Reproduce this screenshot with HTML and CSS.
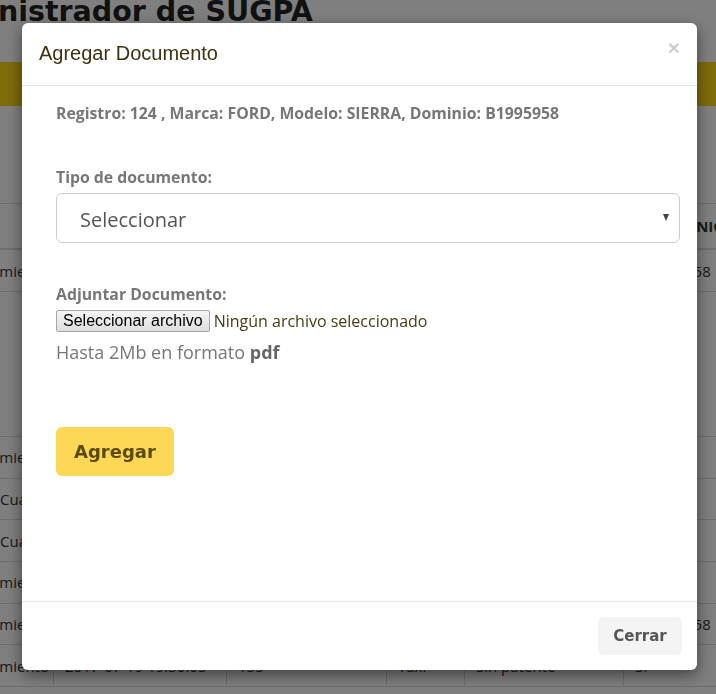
FILE: index.html
```html
<!DOCTYPE html>
<html lang="es">
<head>
<meta charset="utf-8">
<title>Agregar Documento</title>
<link rel="stylesheet" href="styles.css">
</head>
<body>
<div class="page">
  <h1 class="brand">Administrador de SUGPA</h1>
  <div class="band"></div>
  <div class="grid">
    <div class="row head">
      <div class="cell lead"></div><div class="cell">Fecha</div><div class="cell">Licencia</div><div class="cell">Tipo</div><div class="cell">Patente</div><div class="cell dom-head">DOMINIO</div>
    </div>
    <div class="row first">
      <div class="cell lead">Funcionamiento</div><div class="cell">2017-07-19 19:30:05</div><div class="cell">124</div><div class="cell">Taxi</div><div class="cell">FORD</div><div class="cell dom">B1995958</div>
    </div>
    <div class="row tall">
      <div class="cell lead"></div><div class="cell"></div><div class="cell"></div><div class="cell"></div><div class="cell"></div><div class="cell"></div>
    </div>
    <div class="row">
      <div class="cell lead">Funcionamiento</div><div class="cell">2017-07-19 19:30:05</div><div class="cell">131</div><div class="cell">Taxi</div><div class="cell">Sin patente</div><div class="cell"></div>
    </div>
    <div class="row">
      <div class="cell lead start">Cuarentena</div><div class="cell">2017-07-19 19:30:05</div><div class="cell">138</div><div class="cell">Taxi</div><div class="cell">Sin patente</div><div class="cell"></div>
    </div>
    <div class="row">
      <div class="cell lead start">Cuarentena</div><div class="cell">2017-07-19 19:30:05</div><div class="cell">142</div><div class="cell">Taxi</div><div class="cell">Sin patente</div><div class="cell"></div>
    </div>
    <div class="row">
      <div class="cell lead">Funcionamiento</div><div class="cell">2017-07-19 19:30:05</div><div class="cell">147</div><div class="cell">Taxi</div><div class="cell">Sin patente</div><div class="cell"></div>
    </div>
    <div class="row">
      <div class="cell lead">Funcionamiento</div><div class="cell">2017-07-19 19:30:05</div><div class="cell">151</div><div class="cell">Taxi</div><div class="cell">Sin patente</div><div class="cell dom">B1995958</div>
    </div>
    <div class="row">
      <div class="cell lead">Funcionamiento</div><div class="cell">2017-07-19 19:30:05</div><div class="cell">155</div><div class="cell">Taxi</div><div class="cell">Sin patente</div><div class="cell">SI</div>
    </div>
  </div>
</div>

<div class="backdrop"></div>

<div class="modal-layer">
  <div class="modal">
    <div class="modal-header">
      <h4 class="modal-title">Agregar Documento</h4>
      <button class="close" type="button">×</button>
    </div>
    <div class="modal-body">
      <p class="info">Registro: 124 , Marca: FORD, Modelo: SIERRA, Dominio: B1995958</p>
      <label class="field-label">Tipo de documento:</label>
      <div class="select"><span>Seleccionar</span><span class="caret"></span></div>
      <label class="field-label second">Adjuntar Documento:</label>
      <div class="file">
        <span class="file-btn">Seleccionar archivo</span>
        <span class="file-name">Ningún archivo seleccionado</span>
      </div>
      <p class="hint">Hasta 2Mb en formato <b>pdf</b></p>
      <button class="add" type="button">Agregar</button>
    </div>
    <div class="modal-footer">
      <button class="close-btn" type="button">Cerrar</button>
    </div>
  </div>
</div>
</body>
</html>
```

FILE: styles.css
```css
html, body {
  margin: 0;
  padding: 0;
}

body {
  width: 716px;
  height: 694px;
  overflow: hidden;
  background: #ffffff;
  font-family: "Open Sans", "Liberation Sans", sans-serif;
}

.page {
  width: 716px;
  height: 694px;
  overflow: hidden;
}

.brand {
  margin: 0;
  font-family: "DejaVu Sans", sans-serif;
  font-weight: bold;
  font-size: 28.5px;
  line-height: 24px;
  color: #222222;
  text-indent: -84px;
  white-space: nowrap;
}

.band {
  margin-top: 38px;
  height: 44px;
  background: #ffd817;
}

.grid {
  margin-top: 97px;
  width: 800px;
  border-top: 1px solid #dddddd;
  font-size: 15px;
  color: #333333;
}

.row {
  display: grid;
  grid-template-columns: 54px 173px 160px 78px 159px 176px;
  height: 41.7px;
  box-sizing: border-box;
  border-bottom: 1px solid #dddddd;
}

.row.head {
  height: 46px;
  border-bottom: 2px solid #dddddd;
  font-weight: bold;
}

.row.first {
  height: 42px;
}

.row.tall {
  height: 145px;
}

.cell {
  display: flex;
  align-items: center;
  padding: 0 8px 0 11px;
  border-right: 1px solid #dddddd;
  overflow: hidden;
  white-space: nowrap;
  min-width: 0;
}

.cell.lead {
  justify-content: flex-end;
  padding: 0 4px 0 0;
}

.cell.lead.start {
  justify-content: flex-start;
  padding: 0;
}

.cell.dom {
  padding-left: 17px;
}

.cell.dom-head {
  padding-left: 30px;
}

.backdrop {
  position: fixed;
  inset: 0;
  background: rgba(0, 0, 0, 0.5);
}

.modal-layer {
  position: fixed;
  inset: 0;
  box-sizing: border-box;
  padding: 23px 19px 24px 22px;
  display: flex;
}

.modal {
  flex: 1;
  display: flex;
  flex-direction: column;
  background: #ffffff;
  border-radius: 6px;
  box-shadow: 0 5px 15px rgba(0, 0, 0, 0.5);
  overflow: hidden;
}

.modal-header {
  display: flex;
  justify-content: space-between;
  align-items: flex-start;
  padding: 17px 17px 18px 17px;
  border-bottom: 1px solid #e5e5e5;
}

.modal-title {
  margin: 0;
  font-family: "Liberation Sans", Arial, sans-serif;
  font-weight: normal;
  font-size: 20px;
  line-height: 27px;
  color: #3f3010;
}

.close {
  margin-top: -3px;
  padding: 0;
  border: 0;
  background: none;
  font-family: "Liberation Sans", Arial, sans-serif;
  font-weight: bold;
  font-size: 21px;
  line-height: 21px;
  color: #000000;
  opacity: 0.2;
}

.modal-body {
  flex: 1;
  padding: 17px 17px 0 34px;
}

.info {
  margin: 0;
  font-weight: bold;
  font-size: 15.8px;
  line-height: 20px;
  color: #777777;
}

.field-label {
  display: block;
  margin: 44px 0 6px;
  font-weight: bold;
  font-size: 15.8px;
  line-height: 20px;
  color: #777777;
}

.field-label.second {
  margin-top: 41px;
}

.select {
  height: 50px;
  box-sizing: border-box;
  display: flex;
  align-items: center;
  justify-content: space-between;
  padding: 2px 10px 0 23px;
  border: 1px solid #cccccc;
  border-radius: 6px;
  font-size: 20px;
  color: #555555;
}

.caret {
  width: 0;
  height: 0;
  margin-top: -4px;
  border-left: 3.5px solid transparent;
  border-right: 3.5px solid transparent;
  border-top: 7px solid #444444;
}

.file {
  display: flex;
  align-items: center;
  height: 22px;
}

.file-btn {
  height: 22px;
  box-sizing: border-box;
  padding: 0 6px;
  border: 1px solid #a6a6a6;
  border-radius: 2px;
  background: linear-gradient(#f4f4f4, #dedede);
  font-family: "Liberation Sans", Arial, sans-serif;
  font-size: 16px;
  line-height: 20px;
  color: #000000;
}

.file-name {
  margin-left: 4px;
  font-size: 16px;
  line-height: 22px;
  color: #4a3b12;
}

.hint {
  margin: 8px 0 0;
  font-size: 18px;
  line-height: 24px;
  color: #777777;
}

.hint b {
  color: #666666;
}

.add {
  display: block;
  margin-top: 63px;
  height: 49px;
  padding: 0 18px;
  border: 0;
  border-radius: 6px;
  background: #fdd856;
  color: #5c4a0d;
  font-family: "DejaVu Sans", sans-serif;
  font-weight: bold;
  font-size: 18px;
}

.modal-footer {
  display: flex;
  justify-content: flex-end;
  padding: 15px;
  border-top: 1px solid #e5e5e5;
}

.close-btn {
  width: 84px;
  height: 38px;
  padding: 0;
  border: 0;
  border-radius: 5px;
  background: #f4f4f4;
  color: #555555;
  font-family: "DejaVu Sans", sans-serif;
  font-weight: bold;
  font-size: 15px;
}
```
